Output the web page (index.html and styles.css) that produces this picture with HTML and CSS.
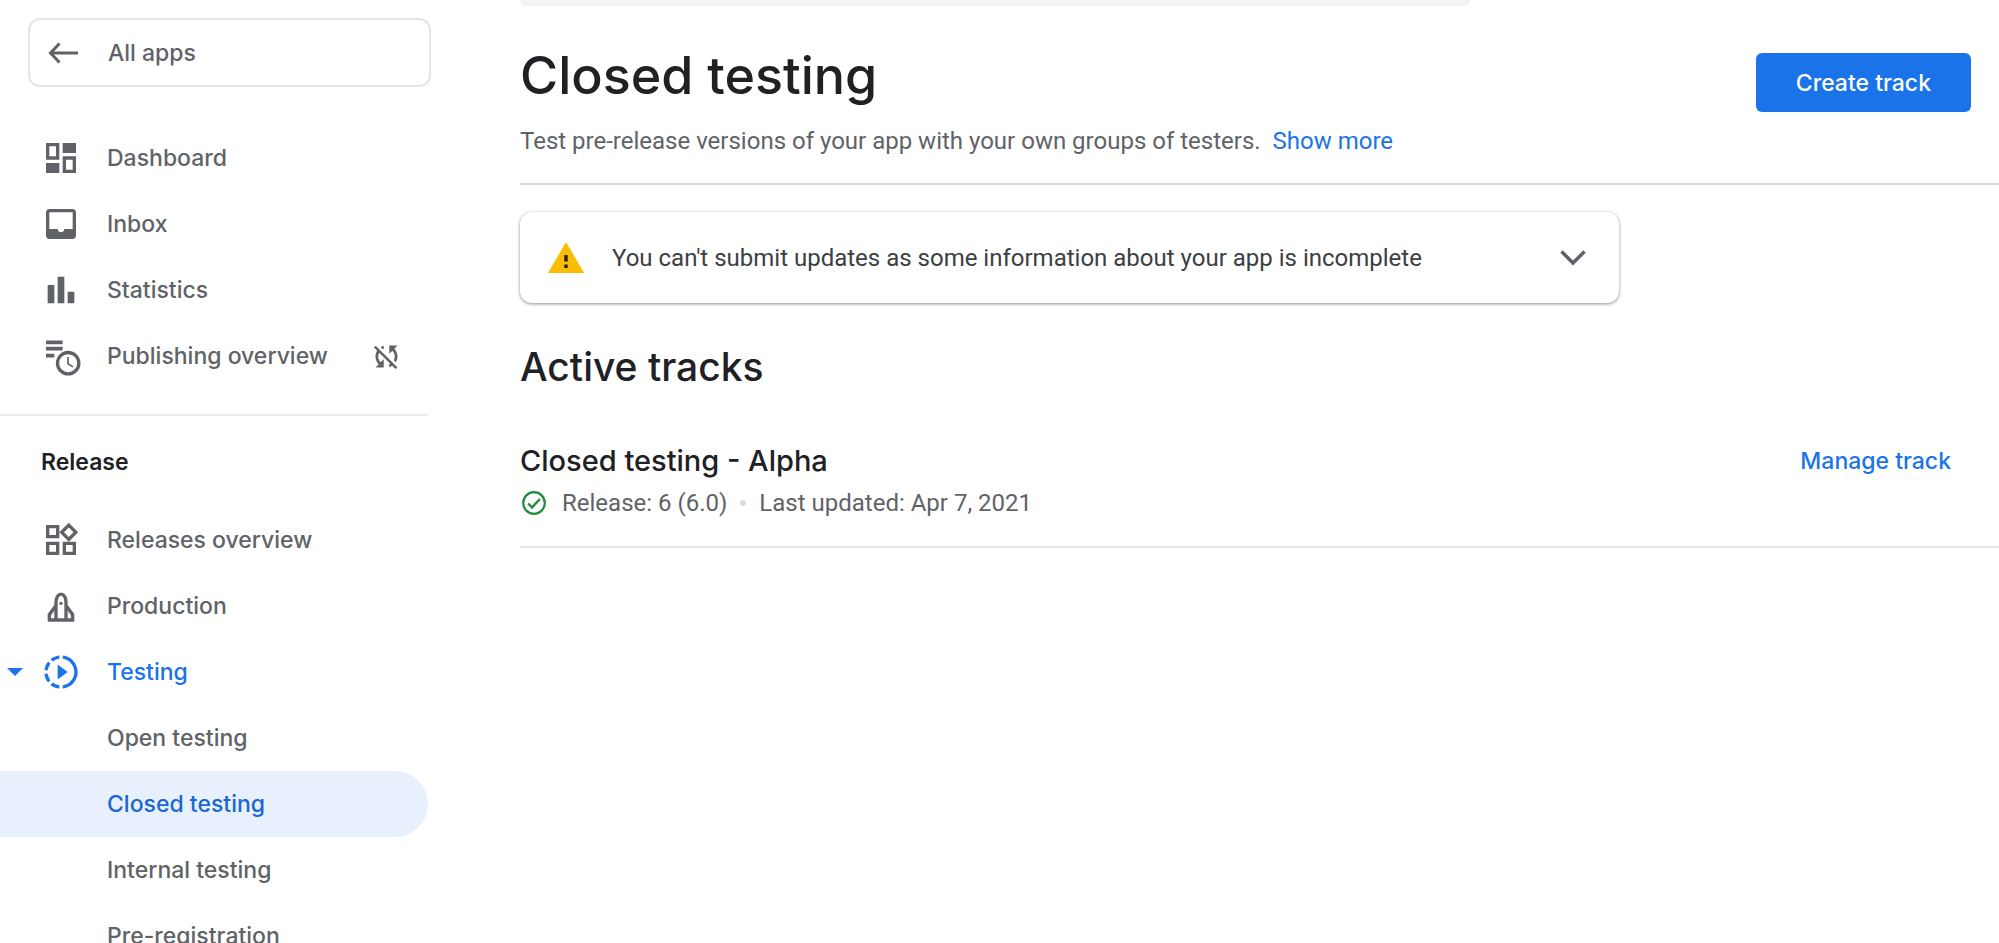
FILE: index.html
```html
<!DOCTYPE html>
<html lang="en">
<head>
  <meta charset="UTF-8" />
  <meta name="viewport" content="width=device-width, initial-scale=1.0" />
  <title>Closed testing</title>
  <link rel="stylesheet" href="styles.css">
</head>
<body>
  <aside class="sidebar">
    <a class="all-apps" href="#">
      <svg class="icon-back" viewBox="0 0 30 24" width="30" height="24"><path d="M30 12H3M11.500 2.500L2.500 12l9 9.500" fill="none" stroke="currentColor" stroke-width="3"/></svg>
      <span>All apps</span>
    </a>

    <nav aria-label="Main">
      <ul class="menu">
        <li><a class="item" href="#">
          <svg class="icon" viewBox="0 0 24 24"><path fill-rule="evenodd" d="M3 3h8v10H3zM5 5v6h4V5zM13 3h8v6h-8zM3 15h8v6H3zM13 11h8v10h-8zM15 13v6h4v-6z"/></svg>
          <span>Dashboard</span>
        </a></li>
        <li><a class="item" href="#">
          <svg class="icon" viewBox="0 0 24 24"><path fill-rule="evenodd" d="M19 3H5c-1.100 0-2 .9-2 2v14c0 1.100.9 2 2 2h14c1.100 0 2-.9 2-2V5c0-1.100-.9-2-2-2zM5 5h14v10h-5c0 1.100-.9 2-2 2s-2-.9-2-2H5z"/></svg>
          <span>Inbox</span>
        </a></li>
        <li><a class="item" href="#">
          <svg class="icon" viewBox="0 0 24 24"><path d="M4 9h4v11H4zM10 4h4v16h-4zM16 13h4v7h-4z"/></svg>
          <span>Statistics</span>
        </a></li>
        <li><a class="item" href="#">
          <svg class="icon" viewBox="0 0 24 24"><path d="M3 2.700h10v2.200H3zM3 6.500h10v2.200H3zM3 10.700h5v2.200H3z"/><circle cx="16.300" cy="16.300" r="6.400" fill="#fff" stroke="currentColor" stroke-width="2"/><path d="M16.200 12.600v4l3 1.900" fill="none" stroke="currentColor"/></svg>
          <span>Publishing overview</span>
          <svg class="icon-sync" viewBox="0 0 24 24" width="33" height="33"><path d="M10 6.350V4.260c-.8.210-1.550.540-2.230.960l1.460 1.460c.250-.120.500-.240.770-.330zm-7.140-.940l2.360 2.360C4.450 8.990 4 10.440 4 12c0 2.210.910 4.200 2.360 5.640L4 20h6v-6l-2.240 2.240C6.680 15.150 6 13.660 6 12c0-1 .250-1.940.680-2.770l8.080 8.080c-.250.130-.500.250-.770.340v2.090c.8-.210 1.550-.540 2.230-.960l2.360 2.360 1.270-1.270L4.140 4.140 2.860 5.410zM20 4h-6v6l2.240-2.240C17.320 8.850 18 10.340 18 12c0 1-.250 1.940-.680 2.770l1.460 1.460C19.550 15.010 20 13.560 20 12c0-2.210-.910-4.200-2.360-5.640L20 4z"/></svg>
        </a></li>
      </ul>

      <h2 class="menu-title">Release</h2>
      <ul class="menu">
        <li><a class="item" href="#">
          <svg class="icon" viewBox="0 0 24 24"><path d="M16.660 4.520l2.830 2.830-2.830 2.830-2.830-2.830 2.830-2.830M9 5v4H5V5h4m10 10v4h-4v-4h4M9 15v4H5v-4h4m7.660-13.310L11 7.340 16.660 13l5.660-5.660-5.660-5.650zM11 3H3v8h8V3zm10 10h-8v8h8v-8zm-10 0H3v8h8v-8z"/></svg>
          <span>Releases overview</span>
        </a></li>
        <li><a class="item" href="#">
          <svg class="icon" viewBox="0 0 24 24"><g fill="none" stroke="currentColor" stroke-width="2"><path d="M9 20V9.500C9 6.600 10.500 4.900 12 4.900s3 1.700 3 4.600V20"/><path d="M8.800 12L5 17.200v3.200h14v-3.200L15.200 12"/></g><circle cx="12" cy="10.400" r="1"/></svg>
          <span>Production</span>
        </a></li>
        <li><a class="item item-open" href="#">
          <svg class="caret" viewBox="0 0 16 8" width="16" height="8"><path d="M0 0h16L8 8z"/></svg>
          <svg class="icon" viewBox="0 0 24 24"><path d="M10 7.500v9l6-4.500zM11 4.070V2.050c-2.010.2-3.840 1-5.320 2.210L7.100 5.690c1.110-.860 2.440-1.440 3.900-1.620zM5.690 7.100L4.260 5.680C3.050 7.160 2.250 8.990 2.050 11h2.020c.180-1.460.760-2.790 1.620-3.900zM4.070 13H2.050c.2 2.010 1 3.840 2.210 5.320l1.430-1.430c-.860-1.100-1.440-2.430-1.620-3.890zm1.610 6.740C7.160 20.950 9 21.750 11 21.950v-2.020c-1.460-.180-2.790-.760-3.900-1.620l-1.420 1.430zM22 12c0 5.160-3.920 9.420-8.950 9.950v-2.020C16.970 19.410 20 16.050 20 12s-3.030-7.410-6.950-7.930V2.050C18.080 2.580 22 6.840 22 12z"/></svg>
          <span>Testing</span>
        </a>
          <ul class="submenu">
            <li><a class="item" href="#">Open testing</a></li>
            <li><a class="item item-active" href="#" aria-current="page">Closed testing</a></li>
            <li><a class="item" href="#">Internal testing</a></li>
            <li><a class="item" href="#">Pre-registration</a></li>
          </ul>
        </li>
      </ul>
    </nav>
  </aside>

  <main class="content">
    <!-- bottom edge of the search bar -->
    <div class="search-edge"></div>

    <header class="page-header">
      <div>
        <h1>Closed testing</h1>
        <p class="lead">Test pre-release versions of your app with your own groups of testers. <a href="#">Show more</a></p>
      </div>
      <button class="btn-create" type="button">Create track</button>
    </header>

    <section class="alert">
      <svg viewBox="0 0 36 31" width="36" height="31"><path d="M18 0l18 31H0z" fill="#fbbc04"/><path d="M16.300 13h3.400v6.500h-3.400zM16.300 22.500h3.400V26h-3.400z" fill="#202124"/></svg>
      <p>You can't submit updates as some information about your app is incomplete</p>
      <button class="btn-expand" type="button" aria-label="Expand">
        <svg viewBox="0 0 26 16" width="26" height="16"><path d="M1.500 1.500L13 13 24.500 1.500" fill="none" stroke="currentColor" stroke-width="3.500"/></svg>
      </button>
    </section>

    <h2 class="section-title">Active tracks</h2>
    <section class="track">
      <div>
        <h3>Closed testing - Alpha</h3>
        <p class="track-info">
          <svg viewBox="0 0 24 24" width="24" height="24"><circle cx="12" cy="12" r="10.800" fill="none" stroke="currentColor" stroke-width="2.200"/><path d="M6.200 12.500l3.900 3.900 7.800-8.400" fill="none" stroke="currentColor" stroke-width="2.400"/></svg>
          <span>Release: 6 (6.0)</span>
          <span class="dot"></span>
          <span>Last updated: Apr 7, 2021</span>
        </p>
      </div>
      <a class="manage" href="#">Manage track</a>
    </section>
  </main>
</body>
</html>
```
FILE: styles.css
```css
* {
  box-sizing: border-box;
}
body {
  margin: 0;
  height: 100vh;
  display: flex;
  overflow: hidden;
  background-color: #fff;
  color: #202124;
  font-family: Inter, sans-serif;
  font-size: 23px;
  font-weight: 500;
}
h1, h2, h3, p, ul {
  margin: 0;
  padding: 0;
  font-weight: 500;
}
ul {
  list-style: none;
}
a {
  color: #1a73e8;
  text-decoration: none;
}
button {
  font: inherit;
  border: none;
  cursor: pointer;
}
svg {
  flex-shrink: 0;
  fill: currentColor;
}

/* Sidebar */
.sidebar {
  width: 431px;
  flex-shrink: 0;
  padding-top: 18px;
}
.all-apps {
  display: flex;
  align-items: center;
  gap: 30px;
  height: 69px;
  margin: 0 0 38px 28px;
  padding-left: 18px;
  border: 2px solid #e4e5ea;
  border-radius: 12px;
  color: #5f6368;
}
.menu {
  margin-right: 3px;
}
.item {
  position: relative;
  display: flex;
  align-items: center;
  height: 66px;
  padding-left: 41px;
  color: #5f6368;
}
.icon {
  width: 40px;
  height: 40px;
  margin-right: 26px;
}
.icon-sync {
  margin-left: auto;
  margin-right: 25px;
}
.caret {
  position: absolute;
  left: 7px;
}
.item-open {
  color: #1a73e8;
}
.submenu .item {
  padding-left: 107px;
}
.submenu .item-active {
  background-color: #e8f0fe;
  border-radius: 0 33px 33px 0;
  color: #1967d2;
}
.menu-title {
  margin: 25px 3px 0 0;
  padding: 30px 0 29px 41px;
  border-top: 2px solid #ebecf1;
  font-size: 23px;
  line-height: 32px;
  font-weight: 600;
}

/* Content */
.content {
  flex: 1;
  padding-left: 89px;
}
.search-edge {
  max-width: 950px;
  height: 6px;
  background-color: #f1f3f4;
  border-radius: 0 0 12px 12px;
}
.page-header {
  display: flex;
  justify-content: space-between;
  align-items: flex-start;
  padding: 38px 28px 25px 0;
  border-bottom: 2px solid #dadce0;
}
h1 {
  font-size: 52px;
  line-height: 64px;
}
.lead {
  margin-top: 16px;
  color: #5f6368;
  font-family: Roboto, sans-serif;
  font-size: 24px;
  line-height: 34px;
  font-weight: 400;
}
.lead a {
  margin-left: 6px;
}
.btn-create {
  height: 59px;
  margin-top: 9px;
  padding: 0 40px;
  background-color: #1a73e8;
  border-radius: 6px;
  color: #fff;
}
.btn-create:hover {
  background-color: #1967d2;
}
.alert {
  display: flex;
  align-items: center;
  max-width: 1099px;
  height: 91px;
  margin-top: 27px;
  padding: 0 33px 0 28px;
  border-radius: 12px;
  box-shadow: 0 1px 3px 1px rgba(60, 64, 67, 0.15), 0 1px 3px rgba(60, 64, 67, 0.4);
}
.alert p {
  flex: 1;
  margin-left: 28px;
  color: #3c4043;
  font-family: Roboto, sans-serif;
  font-size: 24px;
  font-weight: 400;
}
.btn-expand {
  display: flex;
  padding: 0;
  background: none;
  color: #5f6368;
}
.section-title {
  margin-top: 40px;
  font-size: 39px;
  line-height: 48px;
}
.track {
  display: flex;
  justify-content: space-between;
  align-items: flex-start;
  margin-top: 48px;
  padding: 0 48px 24px 0;
  border-bottom: 2px solid #e4e5e7;
}
h3 {
  font-size: 29px;
  line-height: 44px;
}
.track-info {
  display: flex;
  align-items: center;
  height: 39px;
  margin-left: 2px;
  color: #5f6368;
  font-family: Roboto, sans-serif;
  font-size: 24px;
  font-weight: 400;
}
.track-info svg {
  margin-right: 16px;
  color: #1e8e3e;
}
.dot {
  width: 6px;
  height: 6px;
  margin: 0 13px;
  border-radius: 50%;
  background-color: #dadce0;
}
.manage {
  line-height: 44px;
}
```
